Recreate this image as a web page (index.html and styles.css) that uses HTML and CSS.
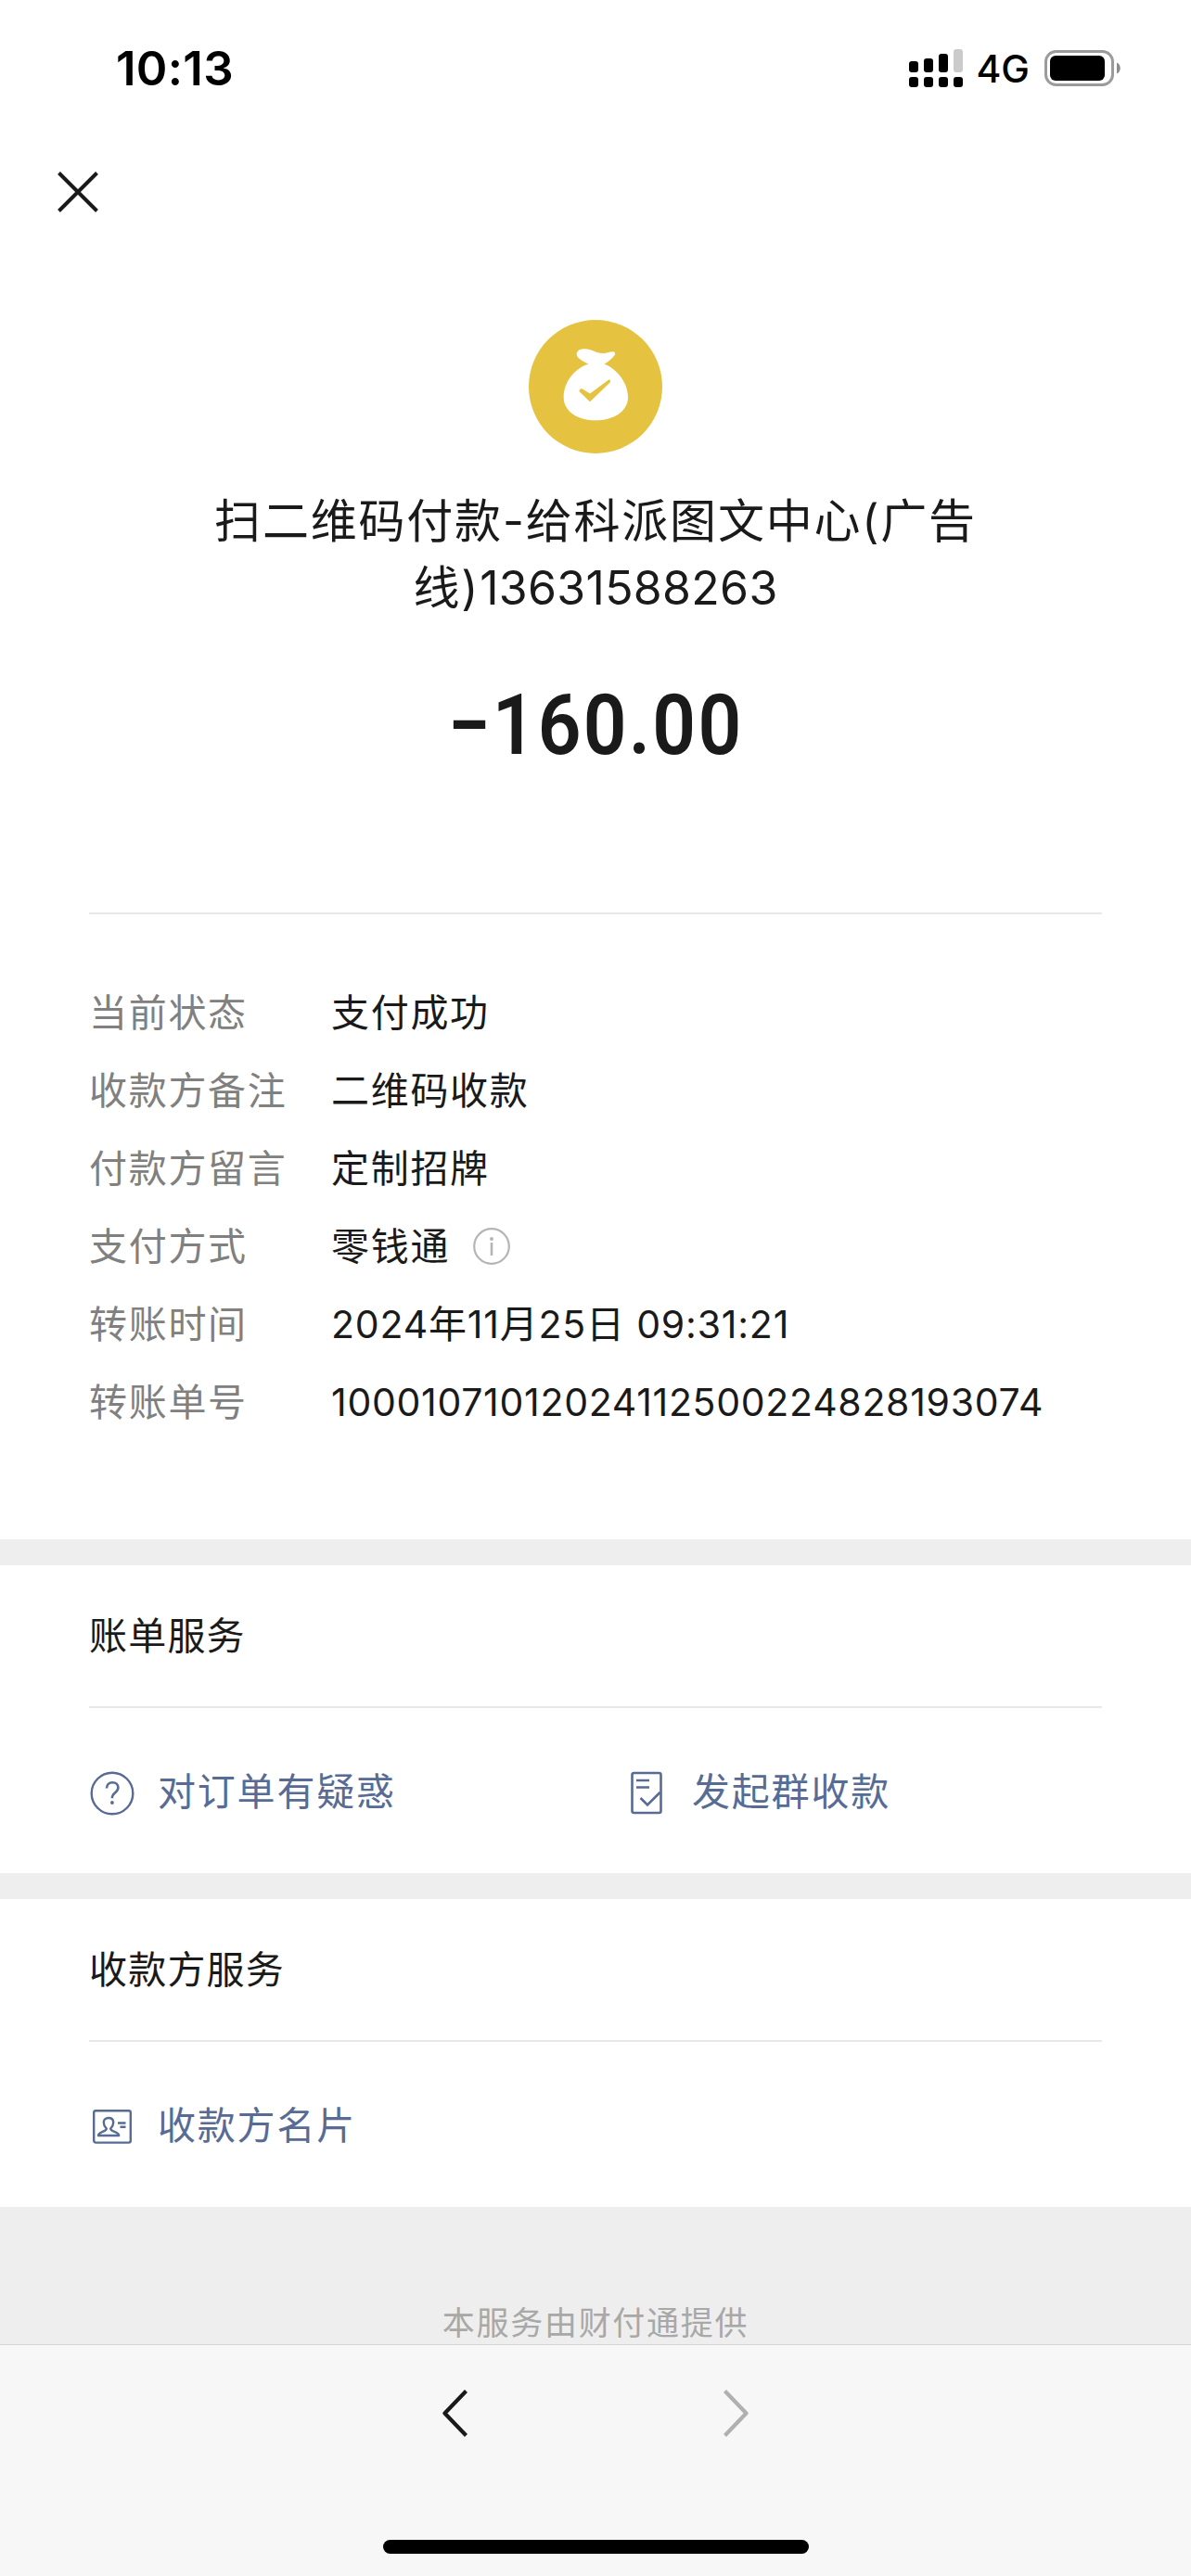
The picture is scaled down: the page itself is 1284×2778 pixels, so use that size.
FILE: index.html
```html
<!DOCTYPE html>
<html lang="zh-CN">
<head>
    <meta charset="UTF-8">
    <meta name="viewport" content="width=device-width, initial-scale=1.0">
    <title>账单详情</title>
    <link rel="stylesheet" href="styles.css">
</head>
<body>
    <div class="status-bar">
        <span class="time">10:13</span>
        <div class="status-right">
            <svg class="signal" width="58" height="41" viewBox="0 0 58 41">
                <rect x="0" y="13" width="10" height="12" rx="3"/>
                <rect x="16" y="10" width="10" height="15" rx="3"/>
                <rect x="32" y="5" width="10" height="20" rx="3"/>
                <rect x="48" y="0" width="10" height="25" rx="3" fill="#cbcbcb"/>
                <rect x="0" y="30" width="10" height="11" rx="3"/>
                <rect x="16" y="30" width="10" height="11" rx="3"/>
                <rect x="32" y="30" width="10" height="11" rx="3"/>
                <rect x="48" y="30" width="10" height="11" rx="3"/>
            </svg>
            <span class="network">4G</span>
            <svg class="battery" width="82" height="39" viewBox="0 0 82 39">
                <rect x="1.5" y="1.5" width="72" height="36" rx="11" fill="none" stroke="#9b9b9b" stroke-width="3"/>
                <rect x="6" y="6" width="59" height="27" rx="6"/>
                <path d="M78 13.500c5 2 5 10 0 12z" fill="#8c8c8c"/>
            </svg>
        </div>
    </div>

    <div class="nav-bar">
        <svg class="close" width="44" height="44" viewBox="0 0 44 44">
            <path d="M1.500 1.500l41 41M42.500 1.500l-41 41" fill="none" stroke="#1a1a1a" stroke-width="4"/>
        </svg>
    </div>

    <div class="summary">
        <svg class="avatar" width="144" height="144" viewBox="0 0 144 144">
            <circle cx="72" cy="72" r="72" fill="#e5c340"/>
            <path d="M51.700 36.500C52.500 32.500 56 31.300 60.700 31.300C68 31.300 72 36 80 36C85 36 88 34 91 34.300C93.500 34.700 93.500 37 92.500 38.300C89.500 42.300 85.500 45.500 81.500 47.600C96 53.500 107 68.500 107 83.500C107 99.500 90 108.300 72 108.300C54 108.300 37.700 99.500 37.700 83.500C37.700 67.500 49 52.500 64.500 47.600C58.500 44.500 51 41 51.700 36.500Z" fill="#fff"/>
            <path d="M54.800 77.500C53.800 75.500 55.800 73.300 58 74.500L66 79.500L85.500 65C87.500 63.500 89 65.800 87.600 67.600L66 88.200Z" fill="#e5c340"/>
        </svg>
        <h1 class="payee">扫二维码付款-给科派图文中心(广告<br>线)<span class="phone">13631588263</span></h1>
        <p class="amount">−160.00</p>
    </div>

    <dl class="details">
        <div class="row"><dt>当前状态</dt><dd>支付成功</dd></div>
        <div class="row"><dt>收款方备注</dt><dd>二维码收款</dd></div>
        <div class="row"><dt>付款方留言</dt><dd>定制招牌</dd></div>
        <div class="row">
            <dt>支付方式</dt>
            <dd>零钱通
                <svg class="info" width="40" height="40" viewBox="0 0 40 40">
                    <circle cx="20" cy="20" r="18.800" fill="none" stroke="#b5b5b5" stroke-width="2.200"/>
                    <circle cx="20" cy="12" r="2" fill="#b5b5b5"/>
                    <path d="M20 16v14" stroke="#b5b5b5" stroke-width="2.600"/>
                </svg>
            </dd>
        </div>
        <div class="row"><dt>转账时间</dt><dd class="date">2024年11月25日 09:31:21</dd></div>
        <div class="row"><dt>转账单号</dt><dd class="number">10001071012024112500224828193074</dd></div>
    </dl>

    <div class="service">
        <h2>账单服务</h2>
        <div class="links">
            <a class="link">
                <svg width="50" height="50" viewBox="0 0 50 50" fill="none" stroke="#576b95">
                    <circle cx="25" cy="25" r="22.300" stroke-width="2.400"/>
                    <path d="M19 19.500c0-4 2.600-6.300 6.200-6.300s6.200 2.300 6.200 5.600c0 2.600-1.400 3.900-3.300 5.500c-2 1.600-3.200 2.900-3.200 5.900" stroke-width="2.600"/>
                    <circle cx="24.900" cy="35" r="1.900" fill="#576b95" stroke="none"/>
                </svg>
                <span>对订单有疑惑</span>
            </a>
            <a class="link">
                <svg width="50" height="50" viewBox="0 0 50 50" fill="none" stroke="#576b95" stroke-width="2.600">
                    <rect x="9.500" y="3" width="31" height="43" rx="2"/>
                    <path d="M14 11h14M14 18.500h14" />
                    <path d="M18.500 30l7.500 7.500l13.500-13.500"/>
                </svg>
                <span>发起群收款</span>
            </a>
        </div>
    </div>

    <div class="service">
        <h2>收款方服务</h2>
        <div class="links">
            <a class="link">
                <svg width="50" height="50" viewBox="0 0 50 50" fill="none" stroke="#576b95" stroke-width="2.400" stroke-linejoin="round">
                    <rect x="5.200" y="7.200" width="39.600" height="34.400" rx="2"/>
                    <path d="M18.800 26.500c-2.500-2.500-3-4.500-3-6.500c0-3 2-5 5.200-5s5.200 2 5.200 5c0 2-.5 4-3 6.500c0 3.500 9 3.500 9 7.500h-22.200c0-4 8.800-4 8.800-7.500z"/>
                    <path d="M31 20.500h8.500M33.500 24.800h6"/>
                </svg>
                <span>收款方名片</span>
            </a>
        </div>
    </div>

    <div class="footer">本服务由财付通提供</div>

    <div class="toolbar">
        <div class="arrows">
            <svg width="27" height="51" viewBox="0 0 27 51" fill="none" stroke="#1a1a1a" stroke-width="4.200">
                <path d="M25.500 1.500l-23 24l23 24" stroke-linejoin="round"/>
            </svg>
            <svg width="27" height="51" viewBox="0 0 27 51" fill="none" stroke="#b0b0b0" stroke-width="4.200">
                <path d="M1.500 1.500l23 24l-23 24" stroke-linejoin="round"/>
            </svg>
        </div>
        <div class="home-indicator"></div>
    </div>
</body>
</html>
```

FILE: styles.css
```css
* {
    margin: 0;
    padding: 0;
    box-sizing: border-box;
}

body {
    width: 1284px;
    height: 2778px;
    overflow: hidden;
    display: flex;
    flex-direction: column;
    font-family: Inter, "Noto Sans CJK SC", sans-serif;
    font-size: 41px;
    font-weight: 400;
    color: #1a1a1a;
    background: #fff;
}

svg {
    display: block;
    flex-shrink: 0;
}

.status-bar {
    height: 146px;
    padding: 0 76px 0 125px;
    display: flex;
    justify-content: space-between;
    align-items: center;
    color: #000;
}

.time {
    font-size: 51px;
    font-weight: 600;
    letter-spacing: 0.3px;
}

.status-right {
    display: flex;
    align-items: center;
}

.network {
    margin: 2px 16px 0 14px;
    font-size: 41px;
    font-weight: 500;
}

.nav-bar {
    height: 122px;
    padding: 0 62px;
    display: flex;
    align-items: center;
}

.summary {
    height: 718px;
    margin: 0 96px;
    padding-top: 77px;
    display: flex;
    flex-direction: column;
    align-items: center;
    text-align: center;
    border-bottom: 2px solid #e8e8e8;
}

.payee {
    margin-top: 37px;
    font-size: 50px;
    font-weight: 400;
    line-height: 72px;
    letter-spacing: 1.8px;
}

.phone {
    letter-spacing: 0.3px;
}

.amount {
    margin-top: 52px;
    font-family: Roboto, sans-serif;
    font-size: 91px;
    font-weight: 600;
    line-height: 120px;
    letter-spacing: 2.5px;
    transform: scaleX(0.9);
}

.details {
    height: 674px;
    padding: 64px 96px 0;
}

.row {
    height: 84px;
    display: flex;
    align-items: center;
    line-height: 84px;
}

.row dt {
    width: 261px;
    color: #808080;
    letter-spacing: 1.7px;
}

.row dd {
    display: flex;
    align-items: center;
    letter-spacing: 1.7px;
}

.row .date {
    letter-spacing: 0.8px;
}

.row .number {
    letter-spacing: 0.7px;
}

.info {
    margin-left: 25px;
}

.service {
    height: 360px;
    padding: 0 96px;
    border-top: 28px solid #eee;
}

.service h2 {
    height: 154px;
    font-size: 41px;
    font-weight: 400;
    line-height: 153px;
    letter-spacing: 1.2px;
    border-bottom: 2px solid #e8e8e8;
}

.links {
    height: 178px;
    padding-top: 5px;
    display: grid;
    grid-template-columns: 576px 1fr;
    align-items: center;
}

.link {
    display: flex;
    align-items: center;
    gap: 24px;
    line-height: 50px;
    color: #576b95;
    letter-spacing: 1.8px;
}

.link span {
    padding-bottom: 3px;
}

.footer {
    height: 148px;
    padding-top: 100px;
    font-size: 35px;
    line-height: 50px;
    letter-spacing: 1.7px;
    text-align: center;
    color: #a8a8a8;
    background: #eee;
}

.toolbar {
    height: 250px;
    display: flex;
    flex-direction: column;
    align-items: center;
    background: #f7f7f7;
    border-top: 1px solid #d5d5d5;
}

.arrows {
    width: 330px;
    margin-top: 48px;
    display: flex;
    justify-content: space-between;
}

.home-indicator {
    width: 459px;
    height: 15px;
    margin-top: 111px;
    border-radius: 8px;
    background: #000;
}
```
